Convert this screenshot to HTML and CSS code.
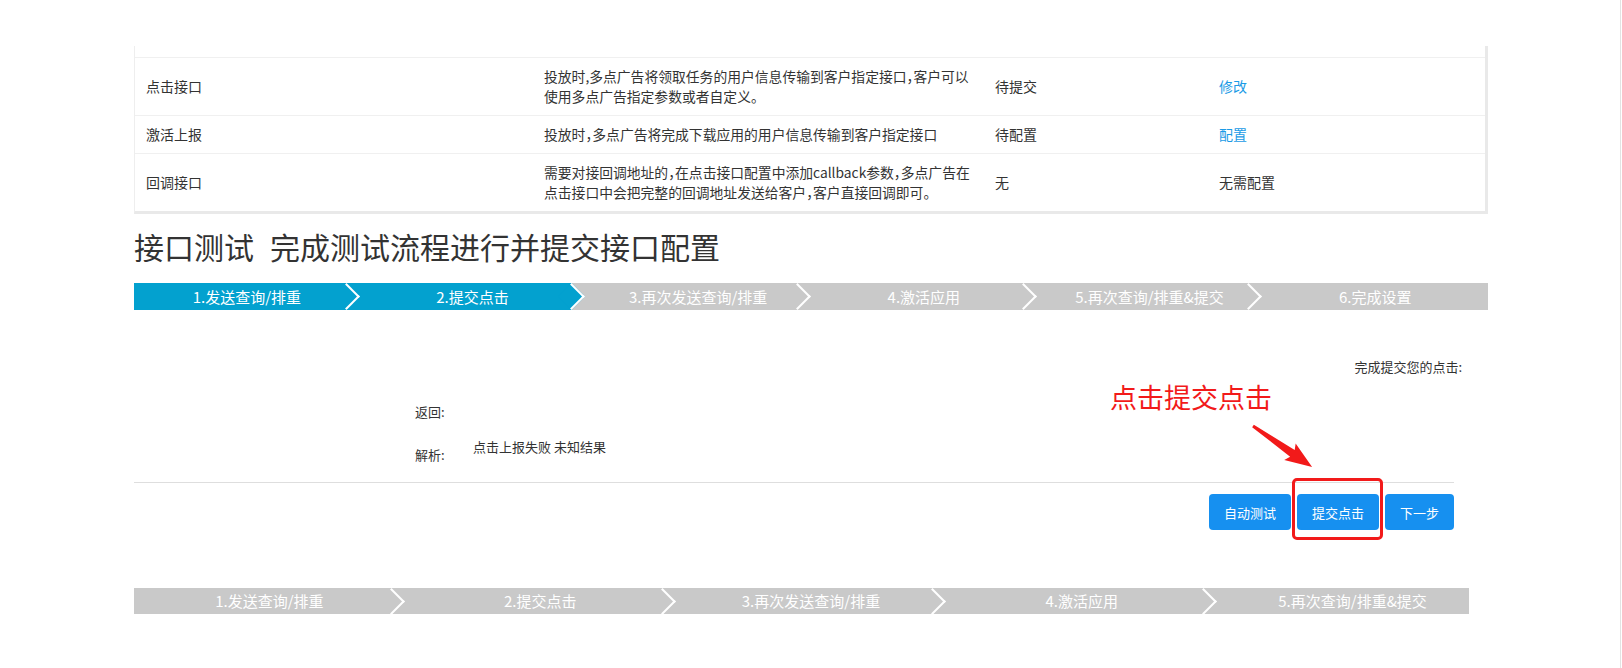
FILE: index.html
```html
<!DOCTYPE html>
<html lang="zh-CN">
<head>
<meta charset="utf-8">
<title>接口测试</title>
<link rel="stylesheet" href="styles.css">
</head>
<body>
<div class="page">
  <div class="content">
    <div class="table-wrap">
      <table class="api-table">
        <colgroup><col class="c1"><col class="c2"><col class="c3"><col class="c4"></colgroup>
        <tbody>
          <tr class="cut-row"><td colspan="4"></td></tr>
          <tr>
            <td>点击接口</td>
            <td class="desc">投放时,多点广告将领取任务的用户信息传输到客户指定接口，客户可以<br>使用多点广告指定参数或者自定义。</td>
            <td>待提交</td>
            <td><a class="link">修改</a></td>
          </tr>
          <tr>
            <td>激活上报</td>
            <td class="desc">投放时，多点广告将完成下载应用的用户信息传输到客户指定接口</td>
            <td>待配置</td>
            <td><a class="link">配置</a></td>
          </tr>
          <tr>
            <td>回调接口</td>
            <td class="desc">需要对接回调地址的，在点击接口配置中添加callback参数，多点广告在<br>点击接口中会把完整的回调地址发送给客户，客户直接回调即可。</td>
            <td>无</td>
            <td>无需配置</td>
          </tr>
        </tbody>
      </table>
    </div>

    <h2 class="section-title">接口测试<span class="sub">完成测试流程进行并提交接口配置</span></h2>

    <ol class="steps">
      <li class="step active">1.发送查询/排重</li>
      <li class="step active current">2.提交点击</li>
      <li class="step">3.再次发送查询/排重</li>
      <li class="step">4.激活应用</li>
      <li class="step">5.再次查询/排重&amp;提交</li>
      <li class="step">6.完成设置</li>
    </ol>

    <div class="test-panel">
      <p class="submit-info">完成提交您的点击:</p>
      <div class="result">
        <div class="result-row"><span class="label">返回:</span><span class="value"></span></div>
        <div class="result-row parse"><span class="label">解析:</span><span class="value">点击上报失败 未知结果</span></div>
      </div>
      <div class="actions">
        <button class="btn" type="button">自动测试</button>
        <button class="btn" type="button">提交点击</button>
        <button class="btn" type="button">下一步</button>
      </div>
    </div>

    <div class="steps-clip">
      <ol class="steps steps-bottom">
        <li class="step">1.发送查询/排重</li>
        <li class="step">2.提交点击</li>
        <li class="step">3.再次发送查询/排重</li>
        <li class="step">4.激活应用</li>
        <li class="step">5.再次查询/排重&amp;提交</li>
      </ol>
    </div>
  </div>

  <div class="annotation-text">点击提交点击</div>
  <svg class="annotation-arrow" width="75" height="55" viewBox="0 0 75 55">
    <g transform="translate(8 8) rotate(34.8)">
      <polygon points="0,-1.5 48,-4 45,-10 72,0 45,10 48,4 0,1.5" fill="#f21a1a"/>
    </g>
  </svg>
  <div class="annotation-box"></div>
</div>
</body>
</html>
```

FILE: styles.css
```css
body {
  margin: 0;
  background: #fff;
  color: #333;
  font-family: "Noto Sans CJK SC", "Noto Sans", sans-serif;
}

.page {
  position: relative;
  width: 1621px;
  height: 668px;
  box-sizing: border-box;
  border-right: 1px solid #e3e3e3;
  overflow: hidden;
}

.content {
  margin-left: 134px;
  width: 1354px;
  padding-top: 46px;
}

/* table */
.table-wrap {
  border-left: 1px solid #eeeeee;
  border-right: 3px solid #e9e9e9;
  border-bottom: 3px solid #e9e9e9;
}

.api-table {
  width: 100%;
  border-collapse: collapse;
  table-layout: fixed;
  font-size: 14px;
  line-height: 20px;
  color: #333;
}

.api-table .c1 { width: 398px; }
.api-table .c2 { width: 451px; }
.api-table .c3 { width: 224px; }

.api-table td {
  padding: 8px 12px 9px 11px;
  border-top: 1px solid #f0f0f0;
  vertical-align: middle;
  text-align: left;
  white-space: nowrap;
}

.api-table td.desc {
  font-feature-settings: "halt";
  font-size: 13.8px;
}

.api-table .cut-row td {
  height: 11px;
  padding: 0;
  border-top: 0;
}

.link {
  color: #1b9be6;
  cursor: pointer;
}

/* title */
.section-title {
  margin: 12px 0 0;
  font-size: 30px;
  line-height: 40px;
  font-weight: normal;
  color: #333;
}

.section-title .sub {
  margin-left: 16px;
}

/* steps */
.steps {
  display: flex;
  list-style: none;
  margin: 17px 0 0;
  padding: 0;
  height: 27px;
  overflow: hidden;
}

.step {
  flex: 1;
  position: relative;
  background: #c9c9c9;
  color: #fff;
  font-size: 15px;
  line-height: 27px;
  text-align: center;
}

.step.active {
  background: #03a1cf;
}

.step.current {
  background: linear-gradient(to right, #03a1cf calc(100% - 13.5px), #c9c9c9 calc(100% - 13.5px));
}

.step::after {
  content: "";
  position: absolute;
  top: 4px;
  right: 4px;
  width: 19px;
  height: 19px;
  box-sizing: border-box;
  border-top: 2px solid #fff;
  border-right: 2px solid #fff;
  transform: rotate(45deg);
}

.step.current::after {
  background: #03a1cf;
}

.step:last-child::after {
  display: none;
}

.steps-clip {
  width: 1335px;
  margin-top: 58px;
  overflow: hidden;
}

.steps-bottom {
  width: 1354px;
  height: 26px;
  margin: 0;
}

.steps-bottom .step {
  line-height: 26px;
}

.steps-bottom .step::after {
  top: 3.5px;
}

/* test panel */
.submit-info {
  margin: 47px 0 0;
  padding-right: 26px;
  text-align: right;
  font-size: 13px;
  line-height: 20px;
}

.result {
  margin: 25px 0 0 281px;
  font-size: 13px;
  line-height: 20px;
}

.result-row {
  display: flex;
  align-items: flex-start;
  min-height: 20px;
}

.result-row + .result-row {
  margin-top: 15px;
}

.label {
  width: 58px;
  flex: none;
}

.result-row.parse .label {
  padding-top: 8px;
}

.actions {
  width: 1320px;
  margin-top: 17px;
  padding-top: 11px;
  border-top: 1px solid #dedede;
  display: flex;
  justify-content: flex-end;
  gap: 6px;
}

.btn {
  height: 36px;
  padding: 0 15px;
  border: 0;
  border-radius: 4px;
  background: #1690f0;
  color: #fff;
  font-family: inherit;
  font-size: 13px;
  cursor: pointer;
}

/* screenshot annotation overlay */
.annotation-text {
  position: absolute;
  left: 1110px;
  top: 383px;
  font-size: 27px;
  line-height: 27px;
  color: #f21a1a;
  white-space: nowrap;
}

.annotation-arrow {
  position: absolute;
  left: 1245px;
  top: 418px;
}

.annotation-box {
  position: absolute;
  left: 1292px;
  top: 478px;
  width: 91px;
  height: 62px;
  box-sizing: border-box;
  border: 3px solid #f21a1a;
  border-radius: 5px;
}
```
